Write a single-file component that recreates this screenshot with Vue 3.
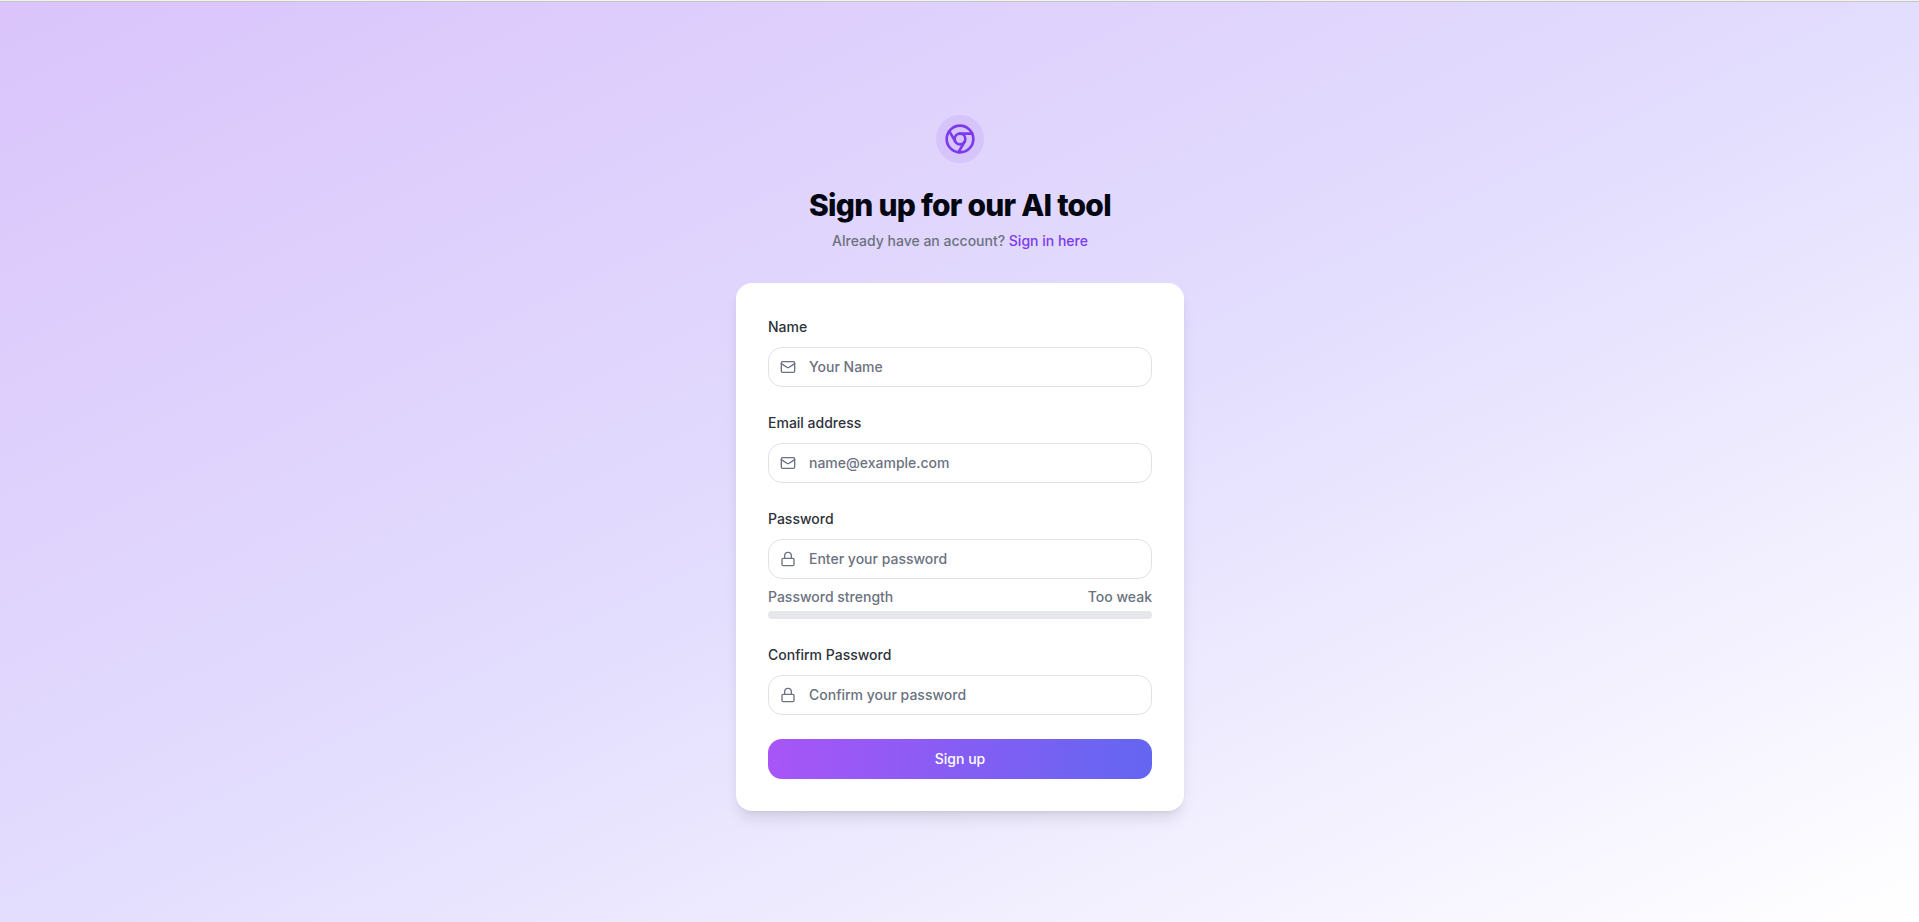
<script setup>
import { computed, reactive } from 'vue'

const form = reactive({ name: '', email: '', password: '', confirm: '' })

const strength = computed(() => {
  const p = form.password
  return [p.length >= 8, /[A-Z]/.test(p), /[0-9]/.test(p), /[^A-Za-z0-9]/.test(p)].filter(Boolean).length
})
const strengthLabel = computed(() => ['Too weak', 'Weak', 'Fair', 'Good', 'Strong'][strength.value])

const fields = [
  { id: 'name', label: 'Name', type: 'text', placeholder: 'Your Name', icon: 'mail' },
  { id: 'email', label: 'Email address', type: 'email', placeholder: 'name@example.com', icon: 'mail' },
  { id: 'password', label: 'Password', type: 'password', placeholder: 'Enter your password', icon: 'lock' },
  { id: 'confirm', label: 'Confirm Password', type: 'password', placeholder: 'Confirm your password', icon: 'lock' },
]
</script>

<template>
  <div class="page">
    <main class="content">
      <header class="intro">
        <div class="logo">
          <svg viewBox="0 0 24 24" aria-hidden="true">
            <circle cx="12" cy="12" r="10" />
            <circle cx="12" cy="12" r="4" />
            <line x1="21.17" x2="12" y1="8" y2="8" />
            <line x1="3.95" x2="8.54" y1="6.06" y2="14" />
            <line x1="10.88" x2="15.46" y1="21.94" y2="14" />
          </svg>
        </div>
        <h1>Sign up for our AI tool</h1>
        <p>Already have an account? <a href="#">Sign in here</a></p>
      </header>

      <form class="card" @submit.prevent>
        <div v-for="f in fields" :key="f.id" class="field">
          <label :for="f.id">{{ f.label }}</label>
          <div class="control">
            <svg v-if="f.icon === 'mail'" viewBox="0 0 24 24" aria-hidden="true">
              <rect width="20" height="16" x="2" y="4" rx="2" />
              <path d="m22 7-8.97 5.7a1.94 1.94 0 0 1-2.06 0L2 7" />
            </svg>
            <svg v-else viewBox="0 0 24 24" aria-hidden="true">
              <rect width="18" height="11" x="3" y="11" rx="2" />
              <path d="M7 11V7a5 5 0 0 1 10 0v4" />
            </svg>
            <input :id="f.id" v-model="form[f.id]" :type="f.type" :placeholder="f.placeholder" />
          </div>
          <div v-if="f.id === 'password'" class="strength">
            <div class="strength-text">
              <span>Password strength</span>
              <span>{{ strengthLabel }}</span>
            </div>
            <div class="track">
              <div class="bar" :style="{ width: strength * 25 + '%' }"></div>
            </div>
          </div>
        </div>
        <button type="submit">Sign up</button>
      </form>
    </main>
  </div>
</template>

<style>
body {
  margin: 0;
}
</style>

<style scoped>
.page {
  box-sizing: border-box;
  min-height: 100vh;
  display: flex;
  align-items: center;
  justify-content: center;
  padding: 3px 0 0 1px;
  border-top: 1px solid #f3f3ee;
  box-shadow: inset 0 1px 0 #c6c3cb;
  background: linear-gradient(to bottom right, #dac4fb, #e3ddfe 50%, #ffffff);
  font-family: Inter, "Liberation Sans", sans-serif;
  font-size: 14px;
  line-height: 20px;
  color: #030712;
}

.content {
  box-sizing: border-box;
  width: 100%;
  max-width: 448px;
}

.intro {
  display: flex;
  flex-direction: column;
  align-items: center;
  margin-bottom: 32px;
  text-align: center;
}

.logo {
  display: flex;
  padding: 8px;
  border-radius: 50%;
  background: rgba(124, 58, 237, 0.1);
  color: #7c3aed;
}

.logo svg {
  width: 32px;
  height: 32px;
}

svg {
  fill: none;
  stroke: currentColor;
  stroke-width: 2;
  stroke-linecap: round;
  stroke-linejoin: round;
}

h1 {
  margin: 24px 0 8px;
  font-size: 30px;
  line-height: 36px;
  font-weight: 800;
  letter-spacing: -0.025em;
}

p {
  margin: 0;
  font-weight: 500;
  color: #6b7280;
}

a {
  color: #7c3aed;
  text-decoration: none;
}

.card {
  display: flex;
  flex-direction: column;
  gap: 24px;
  padding: 32px;
  border-radius: 16px;
  background: #ffffff;
  box-shadow: 0 10px 15px -3px rgba(0, 0, 0, 0.1), 0 4px 6px -4px rgba(0, 0, 0, 0.1);
}

label {
  display: block;
  margin-bottom: 8px;
  line-height: 24px;
  font-weight: 500;
  color: #2e323b;
}

.control {
  display: flex;
  align-items: center;
  box-sizing: border-box;
  height: 40px;
  padding: 0 11px;
  gap: 13px;
  border: 1px solid #e2e2e5;
  border-radius: 14px;
  color: #6b7280;
}

.control:focus-within {
  border-color: #7c3aed;
}

.control svg {
  flex: none;
  width: 16px;
  height: 16px;
}

input {
  flex: 1;
  min-width: 0;
  padding: 0;
  border: 0;
  outline: none;
  background: transparent;
  font: inherit;
  font-weight: 500;
  color: #030712;
}

input::placeholder {
  color: #6b7280;
  opacity: 1;
}

.strength {
  margin-top: 8px;
}

.strength-text {
  display: flex;
  justify-content: space-between;
  margin-bottom: 4px;
  font-weight: 500;
  color: #6b7280;
}

.track {
  height: 8px;
  overflow: hidden;
  border-radius: 4px;
  background: #e5e7eb;
}

.bar {
  height: 100%;
  background: #8b5cf6;
}

button {
  height: 40px;
  padding: 0 16px;
  border: 0;
  border-radius: 14px;
  background: linear-gradient(to right, #a855f7, #6366f1);
  font: inherit;
  font-weight: 500;
  color: #ffffff;
  cursor: pointer;
}
</style>
